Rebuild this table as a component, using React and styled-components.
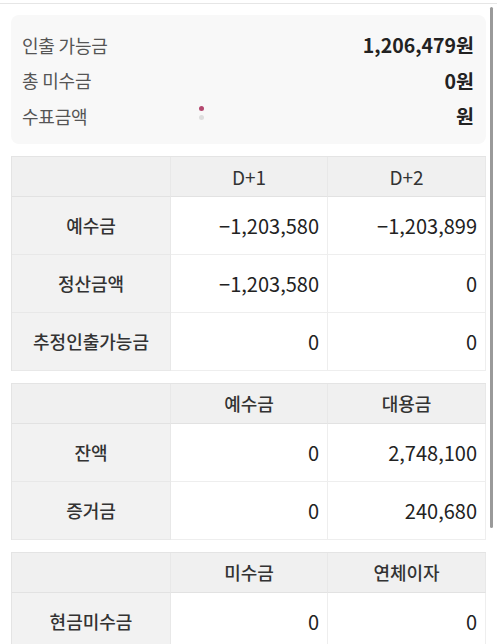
import React from "react";
import styled, { createGlobalStyle } from "styled-components";

const Global = createGlobalStyle`
  html, body { margin: 0; padding: 0; background: #ffffff; }
  body { font-family: "Noto Sans CJK KR", "Noto Sans", sans-serif; color: #222; }
  * { box-sizing: border-box; }
`;

const Page = styled.div`
  position: relative;
  width: 497px;
  height: 644px;
  overflow: hidden;
  background: #fff;
`;

const TopBar = styled.div`
  height: 4px;
  border-bottom: 1px solid #e6e6e6;
`;

const Content = styled.div`
  display: flex;
  flex-direction: column;
  gap: 12px;
  padding: 11px 11px 0 11px;
`;

const SummaryCard = styled.div`
  position: relative;
  background: #f8f8f8;
  border-radius: 8px;
  padding: 12px 12px 10px 11px;
  display: flex;
  flex-direction: column;
`;

const SummaryRow = styled.div`
  height: 35.5px;
  display: flex;
  align-items: center;
  justify-content: space-between;
`;

const SummaryLabel = styled.span`
  font-size: 18px;
  color: #555;
  letter-spacing: -0.2px;
`;

const SummaryValue = styled.span`
  font-size: 19.5px;
  font-weight: 700;
  color: #222;
`;

const Loader = styled.div`
  position: absolute;
  left: 188px;
  top: 91px;
  display: flex;
  flex-direction: column;
  gap: 4px;
`;

const Dot = styled.span`
  width: 5px;
  height: 5px;
  border-radius: 50%;
  background: ${(p) => p.$color};
`;

const Grid = styled.div`
  display: grid;
  grid-template-columns: 159px 157px 1fr;
  grid-auto-rows: 58px;
  grid-template-rows: 40px;
  border: 1px solid #e4e4e4;
  border-right: none;
  border-bottom: none;
`;

const Cell = styled.div`
  display: flex;
  align-items: center;
  border-right: 1px solid #e8e8e8;
  border-bottom: 1px solid #e8e8e8;
`;

const HeadCell = styled(Cell)`
  justify-content: center;
  background: #f0f0f0;
  font-size: ${(p) => (p.$bold ? "18px" : "19px")};
  font-weight: ${(p) => (p.$bold ? 500 : 400)};
  color: #333;
  border-bottom-color: #e2e2e2;
`;

const LabelCell = styled(Cell)`
  justify-content: center;
  background: #f2f2f2;
  font-size: 18px;
  font-weight: 500;
  color: #333;
`;

const ValueCell = styled(Cell)`
  justify-content: flex-end;
  background: #fff;
  font-size: 20px;
  color: #222;
  padding-right: 8px;
  border-color: #eeeeee;
`;

const Scrollbar = styled.div`
  position: absolute;
  left: 490px;
  top: 7px;
  width: 3px;
  height: 521px;
  border-radius: 2px;
  background: #9a9a9a;
`;

const summary = [
  { label: "인출 가능금", value: "1,206,479원" },
  { label: "총 미수금", value: "0원" },
  { label: "수표금액", value: "원" },
];

const tables = [
  {
    head: ["D+1", "D+2"],
    bold: false,
    rows: [
      ["예수금", "−1,203,580", "−1,203,899"],
      ["정산금액", "−1,203,580", "0"],
      ["추정인출가능금", "0", "0"],
    ],
  },
  {
    head: ["예수금", "대용금"],
    bold: true,
    rows: [
      ["잔액", "0", "2,748,100"],
      ["증거금", "0", "240,680"],
    ],
  },
  {
    head: ["미수금", "연체이자"],
    bold: true,
    rows: [["현금미수금", "0", "0"]],
  },
];

export default function App() {
  return (
    <Page>
      <Global />
      <TopBar />
      <Content>
        <SummaryCard>
          {summary.map((s) => (
            <SummaryRow key={s.label}>
              <SummaryLabel>{s.label}</SummaryLabel>
              <SummaryValue>{s.value}</SummaryValue>
            </SummaryRow>
          ))}
          <Loader>
            <Dot $color="#b4486f" />
            <Dot $color="#dedede" />
          </Loader>
        </SummaryCard>
        {tables.map((t, i) => (
          <Grid key={i}>
            <HeadCell />
            {t.head.map((h) => (
              <HeadCell key={h} $bold={t.bold}>
                {h}
              </HeadCell>
            ))}
            {t.rows.map((r) => (
              <React.Fragment key={r[0]}>
                <LabelCell>{r[0]}</LabelCell>
                <ValueCell>{r[1]}</ValueCell>
                <ValueCell>{r[2]}</ValueCell>
              </React.Fragment>
            ))}
          </Grid>
        ))}
      </Content>
      <Scrollbar />
    </Page>
  );
}
